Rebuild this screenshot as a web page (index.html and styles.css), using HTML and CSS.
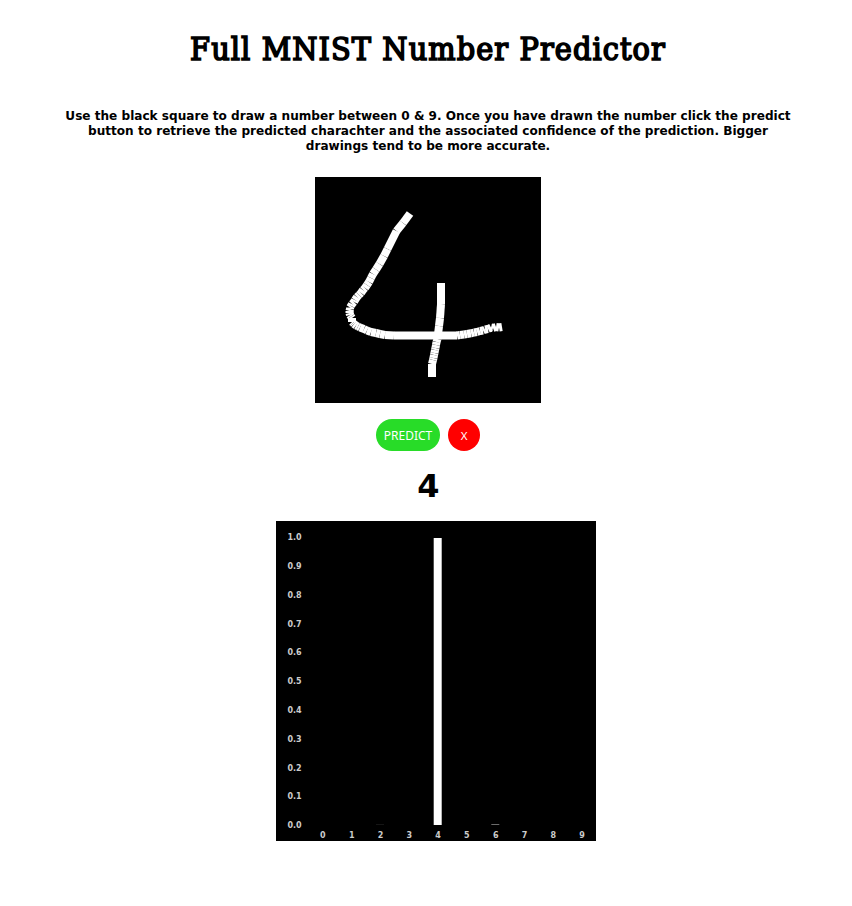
FILE: index.html
```html
<!DOCTYPE html>
<html lang="en">
<head>
<meta charset="utf-8">
<title>Full MNIST Number Predictor</title>
<link rel="stylesheet" href="styles.css">
</head>
<body>
<main class="page">
  <h1 class="title">Full MNIST Number Predictor</h1>
  <p class="intro">Use the black square to draw a number between 0 &amp; 9. Once you have drawn the number click the predict button to retrieve the predicted charachter and the associated confidence of the prediction. Bigger drawings tend to be more accurate.</p>
  <canvas class="pad" id="pad" width="226" height="226"></canvas>
  <div class="actions">
    <button class="btn predict">PREDICT</button>
    <button class="btn clear">X</button>
  </div>
  <h1 class="result">4</h1>
  <svg class="chart" id="chart" width="320" height="320" viewBox="0 0 320 320">
    <rect width="320" height="320" fill="#000"/>
    <rect x="157.7" y="17" width="8" height="287" fill="#fff"/>
    <rect x="100" y="303" width="8" height="1" fill="#151515"/>
    <rect x="215.300" y="303" width="8" height="1" fill="#6b6b6b"/>
  </svg>
</main>
<script src="app.js"></script>
</body>
</html>
```
FILE: app.js
```js
// Pen samples in pad pixels.
const strokes = [
  [[95,36.5],[88,46],[81.5,54],[72.5,72],[69,79],[64.5,87],[61,92.5],[58,97],[56,101],[54,105],[52,108],[50,111],[48,113],[46,116],[44,118],[42,120],[40,123],[39,125],[37,127],[36,129],[35,130.5],[35,132],[34.5,134],[34.5,136],[35,138],[36,139.5],[37,141],[37,145],[38,146],[39,147],[41,148.5],[43,149.5],[45,150.5],[49,152],[52,153.5],[56,155],[61,156],[65,157],[70,158],[79,158.5],[123,158.5],[142,158.5],[145,158],[149,157.5],[152,157],[156,156.3],[159,155.5],[162,155],[165,154],[168,153.5],[170,152.5],[173,152],[176,150.5],[178,151],[181,150],[184,150.5],[187,150]],
  [[126,106],[126,127],[125,141],[124,149],[122.5,162],[121.500,165],[121,168],[120.5,171],[120,173],[119.5,176],[119,178],[118.5,181],[118,183],[117,187],[117,188],[117,200]]
];
const pen = document.getElementById('pad').getContext('2d');
pen.fillStyle = '#000';
pen.fillRect(0, 0, 226, 226);
pen.strokeStyle = '#fff';
pen.lineWidth = 8;
for (const points of strokes) {
  for (let i = 1; i < points.length; i++) {
    pen.beginPath();
    pen.moveTo(points[i - 1][0], points[i - 1][1]);
    pen.lineTo(points[i][0], points[i][1]);
    pen.stroke();
  }
}

const chart = document.getElementById('chart');
function label(text, x, y) {
  const el = document.createElementNS('http://www.w3.org/2000/svg', 'text');
  el.setAttribute('x', x);
  el.setAttribute('y', y);
  el.textContent = text;
  chart.append(el);
}
for (let i = 0; i <= 10; i++) label((i / 10).toFixed(1), 18.5, 307.3 - i * 28.82);
for (let i = 0; i < 10; i++) label(i, 46.9 + i * 28.8, 317.3);
```
FILE: styles.css
```css
html { overflow: hidden; }
body {
  margin: 0;
  background: #fff;
  color: #000;
  font-family: "DejaVu Sans", sans-serif;
}
.page {
  display: flex;
  flex-direction: column;
  align-items: center;
  width: 856px;
}
.title {
  margin: 27px 0 0;
  font: 400 32px/44px "Roboto Slab", "DejaVu Serif Condensed", "DejaVu Serif", serif;
  font-stretch: condensed;
  letter-spacing: 1.1px;
  -webkit-text-stroke: 1.6px #000;
  white-space: nowrap;
}
.intro {
  width: 732px;
  margin: 37.5px 0 23.5px;
  font-size: 12.08px;
  font-weight: bold;
  line-height: 15px;
  text-align: center;
}
.pad { display: block; }
.actions {
  display: flex;
  gap: 8px;
  margin-top: 16px;
}
.btn {
  height: 32px;
  padding: 1px 0 0;
  border: 0;
  border-radius: 16px;
  color: #fff;
  font: 12px/31px "Noto Sans", sans-serif;
}
.predict { width: 64px; background: #28dc28; }
.clear { width: 32px; background: #f00; font-size: 11.5px; }
.result {
  margin: 16px 0;
  padding-left: 1px;
  font-size: 32px;
  line-height: 38px;
}
.chart {
  display: block;
  margin-left: 16px;
}
.chart text {
  fill: #ccc;
  font: bold 8px "DejaVu Sans", sans-serif;
  text-anchor: middle;
}
```
